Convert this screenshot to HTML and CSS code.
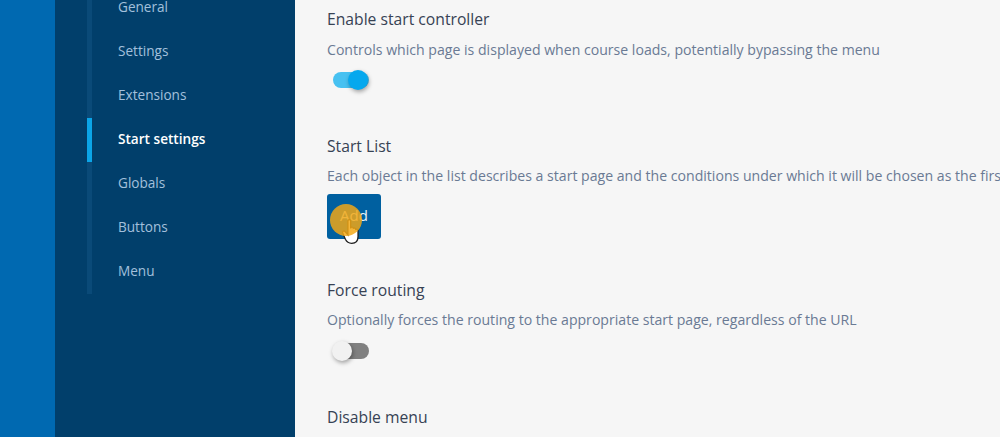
FILE: index.html
```html
<!DOCTYPE html>
<html lang="en">
<head>
  <meta charset="UTF-8" />
  <meta name="viewport" content="width=device-width, initial-scale=1.0" />
  <title>Start settings</title>
  <link rel="stylesheet" href="styles.css">
</head>
<body>
  <div class="app">
    <div class="strip"></div>
    <div class="sidebar">
      <ul class="nav">
        <li>General</li>
        <li>Settings</li>
        <li>Extensions</li>
        <li class="active">Start settings</li>
        <li>Globals</li>
        <li>Buttons</li>
        <li>Menu</li>
      </ul>
    </div>
    <div class="content">
      <div class="field field-start">
        <h4>Enable start controller</h4>
        <p>Controls which page is displayed when course loads, potentially bypassing the menu</p>
        <div class="toggle on"><span class="knob"></span></div>
      </div>
      <div class="field field-list">
        <h4>Start List</h4>
        <p>Each object in the list describes a start page and the conditions under which it will be chosen as the first page</p>
        <div class="add-wrap">
          <button class="add">Add</button>
          <svg class="cursor" width="23" height="30" viewBox="0 0 20 26">
            <path d="M6 2.500c0-1.500 2.400-1.500 2.400 0V9l.2-.9c1.100-.6 2 0 2.100.8 1-.6 2 0 2.100.9 1-.4 2 .2 2 1.300V16c0 3.500-2 6-5.500 6-3 0-4.500-1.500-5.500-3.500L1.500 13c-.6-1.300 1-2.400 2-1.300L6 14.500z" fill="#fff" stroke="#1d1d1d" stroke-width="1.100"/>
          </svg>
          <span class="click"></span>
        </div>
      </div>
      <div class="field field-routing">
        <h4>Force routing</h4>
        <p>Optionally forces the routing to the appropriate start page, regardless of the URL</p>
        <div class="toggle"><span class="knob"></span></div>
      </div>
      <div class="field field-menu">
        <h4>Disable menu</h4>
      </div>
    </div>
  </div>
</body>
</html>
```

FILE: styles.css
```css
* { box-sizing: border-box; }
html, body { margin: 0; height: 100%; overflow: hidden; }
body { font-family: "Open Sans", sans-serif; background: #f6f6f6; }
.app { display: flex; height: 437px; overflow: hidden; }
.strip { width: 55px; background: #0069b1; }
.sidebar { width: 240px; background: #013f6b; padding-left: 32px; }
.nav { list-style: none; margin: -14px 0 0; padding: 0; border-left: 5px solid #0a4a78; }
.nav li { height: 44px; line-height: 42px; margin-left: -5px; padding-left: 26px; border-left: 5px solid transparent; font-size: 13.600px; color: #a3c0dc; }
.nav li.active { color: #fff; font-weight: 600; border-left-color: #0ba5e8; }
.content { flex: 1; min-width: 0; padding-left: 32px; white-space: nowrap; overflow: hidden; }
.field h4 { margin: 0; font-size: 15.700px; line-height: 20px; font-weight: 500; color: #374254; }
.field p { margin: 0; font-size: 14.100px; line-height: 20px; color: #6a7a94; }
.field-start { margin-top: 9px; }
.field-start p { margin-top: 11px; }
.field-start .toggle { margin-top: 12px; }
.field-list { margin-top: 48px; }
.field-list p { margin-top: 10px; }
.field-routing { margin-top: 41px; }
.field-routing p { margin-top: 10px; }
.field-menu { margin-top: 48px; }
.toggle { position: relative; width: 36px; height: 16px; margin: 13px 0 0 6px; border-radius: 8px; background: #808080; }
.toggle.on { background: #47c1f1; }
.knob { position: absolute; left: -1px; top: -2px; width: 20px; height: 20px; border-radius: 50%; background: #f1f1f1; box-shadow: 1px 2px 4px rgba(0,0,0,.35); }
.toggle.on .knob { left: 15px; background: #06a8ee; }
.add-wrap { position: relative; width: 54px; margin-top: 8px; }
.add { display: block; width: 54px; height: 45px; padding: 0 0 4px; border: 0; border-radius: 3px; background: #0060a0; color: #e8f2fa; font-family: inherit; font-size: 15px; font-weight: 500; }
.click { position: absolute; left: 3px; top: 10px; width: 32px; height: 32px; border-radius: 50%; background: rgba(243,168,20,.84); }
.cursor { position: absolute; left: 14px; top: 24px; }
```
